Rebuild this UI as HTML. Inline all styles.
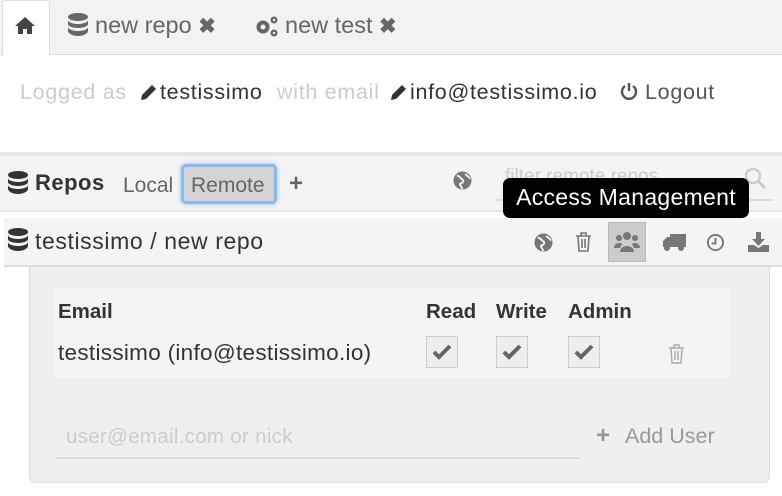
<!DOCTYPE html>
<html><head><meta charset="utf-8"><style>
*{box-sizing:border-box;margin:0;padding:0}
body{width:782px;height:496px;background:#fff;font-family:"Liberation Sans",sans-serif;position:relative;overflow:hidden;color:#333}
.abs{position:absolute;white-space:nowrap}
svg{display:block}
.lg{font-size:21.5px;letter-spacing:0.7px;top:80px}
</style></head><body>
<!-- tab bar -->
<div class="abs" style="left:0;top:0;width:782px;height:55px;background:#f2f2f2;border-bottom:1px solid #ddd"></div>
<div class="abs" style="left:2px;top:0;width:48px;height:56px;background:#fff;border:1px solid #ddd;border-bottom:none;border-radius:4px 4px 0 0"></div>
<svg class="abs" style="left:15px;top:16px" width="20" height="18" viewBox="0 0 20 18"><path d="M10 1L0 10h3v8h5v-5h4v5h5v-8h3z" fill="#444"/></svg>
<svg class="abs" style="left:68px;top:13px" width="20" height="24" viewBox="0 0 20 24" fill="#666"><ellipse cx="10" cy="4" rx="10" ry="4"/><path d="M0 7c0 2 4 4 10 4s10-2 10-4v4c0 2-4 4-10 4S0 13 0 11z"/><path d="M0 14c0 2 4 4 10 4s10-2 10-4v4c0 2-4 5-10 5S0 20 0 18z"/></svg>
<div class="abs" style="left:95px;top:12px;font-size:23.5px;color:#666">new repo <b style="font-size:21px">✖</b></div>
<svg class="abs" style="left:254px;top:14px" width="26" height="24" viewBox="0 0 26 24" fill="#666"><circle cx="9" cy="13" r="6.5"/><circle cx="9" cy="13" r="2.5" fill="#f2f2f2"/><circle cx="20" cy="6" r="3.5"/><circle cx="20" cy="6" r="1.2" fill="#f2f2f2"/><circle cx="20" cy="19" r="3.5"/><circle cx="20" cy="19" r="1.2" fill="#f2f2f2"/></svg>
<div class="abs" style="left:285px;top:12px;font-size:23.5px;color:#666">new test <b style="font-size:21px">✖</b></div>
<!-- logged -->
<div class="abs lg" style="left:20px;color:#ccc">Logged as</div>
<svg class="abs" style="left:140px;top:83px" width="18" height="18" viewBox="0 0 18 18"><path d="M1 17l1-5L12 2l4 4L6 16z" fill="#333"/></svg>
<div class="abs lg" style="left:160px">testissimo</div>
<div class="abs lg" style="left:277px;color:#ccc">with email</div>
<svg class="abs" style="left:390px;top:83px" width="18" height="18" viewBox="0 0 18 18"><path d="M1 17l1-5L12 2l4 4L6 16z" fill="#333"/></svg>
<div class="abs lg" style="left:410px">info@testissimo.io</div>
<svg class="abs" style="left:620px;top:82px" width="18" height="19" viewBox="0 0 18 19"><path d="M5 4a7 7 0 1 0 8 0" stroke="#555" stroke-width="2.4" fill="none"/><path d="M9 1v8" stroke="#555" stroke-width="2.4"/></svg>
<div class="abs lg" style="left:645px;color:#555">Logout</div>
<!-- repos row -->
<div class="abs" style="left:0;top:152px;width:782px;height:4px;background:#e6e6e6"></div>
<div class="abs" style="left:0;top:156px;width:782px;height:56px;background:#f4f4f4;border-bottom:2px solid #e6e6e6"></div>
<svg class="abs" style="left:8px;top:171px" width="20" height="24" viewBox="0 0 20 24" fill="#333"><ellipse cx="10" cy="4" rx="10" ry="4"/><path d="M0 7c0 2 4 4 10 4s10-2 10-4v4c0 2-4 4-10 4S0 13 0 11z"/><path d="M0 14c0 2 4 4 10 4s10-2 10-4v4c0 2-4 5-10 5S0 20 0 18z"/></svg>
<div class="abs" style="left:35px;top:170px;font-size:22px;letter-spacing:0.5px;font-weight:bold;color:#333">Repos</div>
<div class="abs" style="left:123px;top:174px;font-size:21px;color:#666">Local</div>
<div class="abs" style="left:181px;top:164px;width:96px;height:40px;border:3px solid #8cb8ee;border-radius:5px;box-shadow:0 0 4px #8cb8ee;background:#d4d4d4"></div>
<div class="abs" style="left:191px;top:174px;font-size:21px;color:#666">Remote</div>
<div class="abs" style="left:289px;top:170px;font-size:24px;font-weight:bold;color:#666">+</div>
<svg class="abs" style="left:453px;top:171px" width="19" height="19" viewBox="0 0 20 20"><circle cx="10" cy="10" r="9.5" fill="#777"/><path d="M4 5c3 0 4 3 6 4s0 4-2 4 1 4 2 6M13 3c1 2 3 2 5 5" stroke="#f4f4f4" stroke-width="2" fill="none"/></svg>
<div class="abs" style="left:495px;top:199px;width:278px;height:2px;background:#ddd"></div>
<div class="abs" style="left:505px;top:166px;font-size:19px;color:#ccc">filter remote repos</div>
<svg class="abs" style="left:743px;top:166px" width="24" height="24" viewBox="0 0 24 24"><circle cx="10" cy="10" r="7" stroke="#ccc" stroke-width="2.5" fill="none"/><path d="M15 15l7 7" stroke="#ccc" stroke-width="3"/></svg>
<!-- repo row -->
<div class="abs" style="left:4px;top:218px;width:778px;height:49px;background:#f4f4f4;border-bottom:2px solid #ddd"></div>
<svg class="abs" style="left:8px;top:228px" width="20" height="24" viewBox="0 0 20 24" fill="#333"><ellipse cx="10" cy="4" rx="10" ry="4"/><path d="M0 7c0 2 4 4 10 4s10-2 10-4v4c0 2-4 4-10 4S0 13 0 11z"/><path d="M0 14c0 2 4 4 10 4s10-2 10-4v4c0 2-4 5-10 5S0 20 0 18z"/></svg>
<div class="abs" style="left:35px;top:228px;font-size:23px;letter-spacing:0.6px;color:#333">testissimo / new repo</div>
<svg class="abs" style="left:534px;top:233px" width="19" height="19" viewBox="0 0 20 20"><circle cx="10" cy="10" r="9.5" fill="#777"/><path d="M4 5c3 0 4 3 6 4s0 4-2 4 1 4 2 6M13 3c1 2 3 2 5 5" stroke="#f4f4f4" stroke-width="2" fill="none"/></svg>
<svg class="abs" style="left:575px;top:232px" width="17" height="20" viewBox="0 0 17 20"><path d="M1 4h15M6 4V1h5v3M3 4l1 15h9l1-15M7 7v9M10 7v9" stroke="#777" stroke-width="1.6" fill="none"/></svg>
<div class="abs" style="left:608px;top:222px;width:38px;height:40px;background:#ccc;border:1px solid #bbb"></div>
<svg class="abs" style="left:614px;top:231px" width="26" height="22" viewBox="0 0 26 22" fill="#777"><circle cx="13" cy="5" r="4"/><circle cx="5" cy="7" r="3"/><circle cx="21" cy="7" r="3"/><path d="M6 21c0-8 14-8 14 0zM0 17c0-5 6-6 8-4l-2 4zM26 17c0-5-6-6-8-4l2 4z"/></svg>
<svg class="abs" style="left:662px;top:233px" width="24" height="19" viewBox="0 0 24 19" fill="#777"><rect x="8" y="1" width="16" height="13"/><path d="M1 8l4-4h3v10H1z"/><circle cx="5" cy="15" r="3"/><circle cx="19" cy="15" r="3"/></svg>
<svg class="abs" style="left:706px;top:233px" width="19" height="19" viewBox="0 0 20 20"><circle cx="10" cy="10" r="8" stroke="#777" stroke-width="2" fill="none"/><path d="M10 5v6H6" stroke="#777" stroke-width="2" fill="none"/></svg>
<svg class="abs" style="left:748px;top:231px" width="21" height="21" viewBox="0 0 21 21" fill="#777"><path d="M8 1h5v7h4l-6.5 7L4 8h4z"/><path d="M0 14h6l4.5 3 4.5-3h6v7H0z"/></svg>
<!-- tooltip -->
<div class="abs" style="left:503px;top:178px;width:246px;height:40px;background:#000;border-radius:7px;color:#fff;font-size:23px;letter-spacing:0.3px;line-height:38px;text-align:center">Access Management</div>
<!-- panel -->
<div class="abs" style="left:29px;top:267px;width:741px;height:216px;background:#efefef;border:1px solid #ddd;border-top:none;border-radius:0 0 7px 7px"></div>
<div class="abs" style="left:54px;top:288px;width:676px;height:90px;background:#f4f4f4"></div>
<div class="abs" style="left:58px;top:300px;font-size:20.5px;font-weight:bold">Email</div>
<div class="abs" style="left:426px;top:300px;font-size:20.5px;font-weight:bold">Read</div>
<div class="abs" style="left:496px;top:300px;font-size:20.5px;font-weight:bold">Write</div>
<div class="abs" style="left:568px;top:300px;font-size:20.5px;font-weight:bold">Admin</div>
<div class="abs" style="left:58px;top:340px;font-size:22.5px;letter-spacing:0.3px">testissimo (info@testissimo.io)</div>
<div class="abs" style="left:426px;top:336px;width:32px;height:32px;border:1px solid #ccc;background:#eee"></div>
<div class="abs" style="left:496px;top:336px;width:32px;height:32px;border:1px solid #ccc;background:#eee"></div>
<div class="abs" style="left:568px;top:336px;width:32px;height:32px;border:1px solid #ccc;background:#eee"></div>
<svg class="abs" style="left:432px;top:344px" width="20" height="16" viewBox="0 0 20 16"><path d="M2 8l5 5L18 2" stroke="#666" stroke-width="4" fill="none"/></svg>
<svg class="abs" style="left:502px;top:344px" width="20" height="16" viewBox="0 0 20 16"><path d="M2 8l5 5L18 2" stroke="#666" stroke-width="4" fill="none"/></svg>
<svg class="abs" style="left:574px;top:344px" width="20" height="16" viewBox="0 0 20 16"><path d="M2 8l5 5L18 2" stroke="#666" stroke-width="4" fill="none"/></svg>
<svg class="abs" style="left:668px;top:344px" width="17" height="20" viewBox="0 0 17 20"><path d="M1 4h15M6 4V1h5v3M3 4l1 15h9l1-15M7 7v9M10 7v9" stroke="#aaa" stroke-width="1.4" fill="none"/></svg>
<div class="abs" style="left:66px;top:425px;font-size:20.5px;letter-spacing:0.3px;color:#ccc">user@email.com or nick</div>
<div class="abs" style="left:55px;top:457px;width:524px;height:2px;background:#ddd"></div>
<div class="abs" style="left:596px;top:422px;font-size:24px;font-weight:bold;color:#999">+</div>
<div class="abs" style="left:625px;top:424px;font-size:21.5px;color:#999">Add User</div>
</body></html>
